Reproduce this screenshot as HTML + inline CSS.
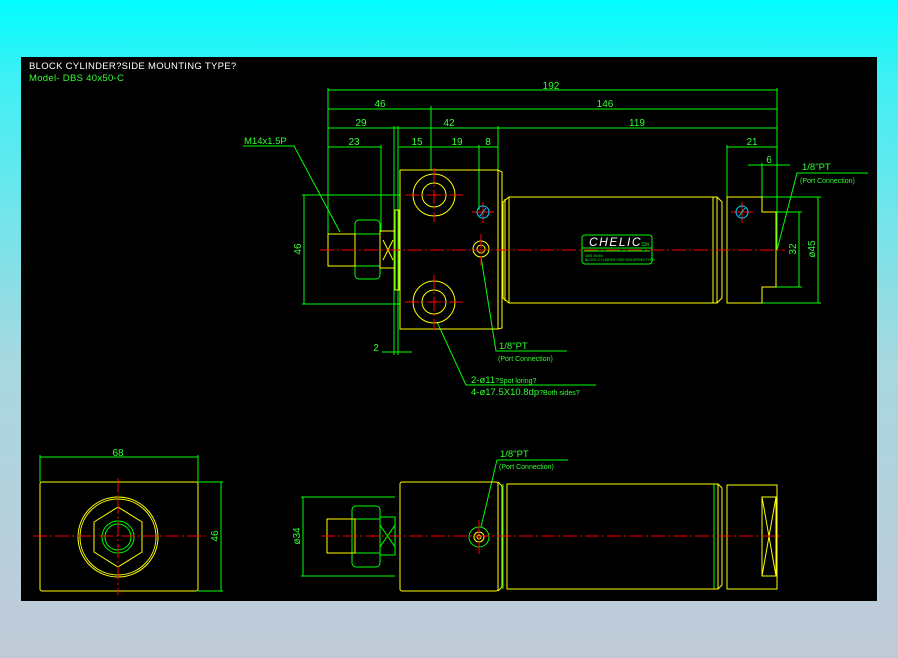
<!DOCTYPE html>
<html><head><meta charset="utf-8"><style>
html,body{margin:0;padding:0}
body{width:898px;height:658px;background:linear-gradient(#00fdff 0%,#3ff0f4 12%,#a8d8e0 55%,#c2cad8 100%);position:relative;overflow:hidden}
svg{position:absolute;left:0;top:0}
text{font-family:"Liberation Sans",sans-serif}
</style></head><body>
<svg width="898" height="658" viewBox="0 0 898 658">
<rect x="21" y="57" width="856" height="544" fill="#000"/>
<text x="29" y="69" fill="#fff" font-size="9.5" letter-spacing="0.3">BLOCK CYLINDER?SIDE MOUNTING TYPE?</text>
<text x="29" y="81" fill="#3f3" font-size="9.5" letter-spacing="0.3">Model- DBS 40x50-C</text>

<g stroke="#0f0" stroke-width="1" fill="none">
<!-- top dims -->
<line x1="328" y1="90" x2="777" y2="90"/>
<line x1="328" y1="109" x2="777" y2="109"/>
<line x1="328" y1="128" x2="777" y2="128"/>
<line x1="328" y1="147" x2="381" y2="147"/>
<line x1="399" y1="147" x2="498" y2="147"/>
<line x1="727" y1="147" x2="777" y2="147"/>
<line x1="748" y1="165" x2="790" y2="165"/>
<line x1="328" y1="88" x2="328" y2="237"/>
<line x1="777" y1="88" x2="777" y2="250"/>
<line x1="431" y1="106" x2="431" y2="170"/>
<line x1="381" y1="145" x2="381" y2="232"/>
<line x1="394" y1="126" x2="394" y2="355"/>
<line x1="398" y1="126" x2="398" y2="355"/>
<line x1="479" y1="145" x2="479" y2="210"/>
<line x1="498" y1="126" x2="498" y2="170"/>
<line x1="727" y1="145" x2="727" y2="197"/>
<line x1="762" y1="163" x2="762" y2="197"/>
<!-- 46 left vertical -->
<line x1="304" y1="195" x2="304" y2="304"/>
<line x1="302" y1="195" x2="400" y2="195"/>
<line x1="302" y1="304" x2="400" y2="304"/>
<line x1="382" y1="352" x2="412" y2="352"/>
<!-- right verticals -->
<line x1="799" y1="212" x2="799" y2="287"/>
<line x1="818" y1="197" x2="818" y2="303"/>
<line x1="776" y1="212" x2="802" y2="212"/>
<line x1="776" y1="287" x2="802" y2="287"/>
<line x1="762" y1="197" x2="821" y2="197"/>
<line x1="762" y1="303" x2="821" y2="303"/>
<!-- leaders -->
<polyline points="243,146 294,146 340,232"/>
<polyline points="481,257 496,351 567,351"/>
<polyline points="777,250 797,173 868,173"/>
<polyline points="437,322 466,385 596,385"/>
<polyline points="481,527 497,460 568,460"/>
<!-- nut top -->
<rect x="355" y="220" width="25" height="59" rx="4"/>
<line x1="355" y1="234" x2="380" y2="234"/><line x1="355" y1="266" x2="380" y2="266"/>
<!-- bottom left view -->
<line x1="40" y1="457" x2="198" y2="457"/>
<line x1="40" y1="455" x2="40" y2="482"/><line x1="198" y1="455" x2="198" y2="482"/>
<line x1="221" y1="482" x2="221" y2="591"/>
<line x1="198" y1="482" x2="223" y2="482"/><line x1="198" y1="591" x2="223" y2="591"/>
<circle cx="118" cy="537" r="16"/><circle cx="118" cy="537" r="13"/>
<!-- bottom right -->
<line x1="303" y1="497" x2="303" y2="576"/>
<line x1="301" y1="497" x2="395" y2="497"/><line x1="301" y1="576" x2="395" y2="576"/>
<rect x="352" y="506" width="28" height="61" rx="4"/>
<line x1="352" y1="519" x2="380" y2="519"/><line x1="352" y1="553" x2="380" y2="553"/>
<rect x="380" y="517" width="15" height="38"/>
<line x1="380" y1="525" x2="395" y2="547"/><line x1="395" y1="525" x2="380" y2="547"/>
<line x1="503" y1="484" x2="503" y2="589"/>
<line x1="714" y1="484" x2="714" y2="589"/>
<circle cx="479" cy="537" r="10"/>
</g>

<g stroke="#ff0" stroke-width="1" fill="none">
<!-- top view -->
<rect x="400" y="170" width="98" height="159"/>
<circle cx="434" cy="195" r="21"/><circle cx="434" cy="195" r="12"/>
<circle cx="434" cy="302" r="21"/><circle cx="434" cy="302" r="12"/>
<rect x="395" y="210" width="4" height="80"/>
<rect x="328" y="234" width="27" height="32"/>
<rect x="380" y="231" width="15" height="37"/>
<line x1="383" y1="240" x2="393" y2="260"/><line x1="393" y1="240" x2="383" y2="260"/>
<polyline points="498,170 502,172 502,328 498,329"/>
<polyline points="509,197 503,202 503,298 509,303"/>
<rect x="509" y="197" width="208" height="106"/>
<line x1="505" y1="199" x2="505" y2="301"/>
<line x1="713" y1="197" x2="713" y2="303"/>
<polyline points="717,197 722,202 722,298 717,303"/>
<polyline points="727,197 762,197 762,212 776,212 776,287 762,287 762,303 727,303 727,197"/>
<circle cx="481" cy="249" r="8"/><circle cx="481" cy="249" r="4"/>
<!-- bottom left view -->
<rect x="40" y="482" width="158" height="109" rx="2"/>
<circle cx="118" cy="537" r="40"/><circle cx="118" cy="537" r="38"/>
<polygon points="118,507 142,522 142,552 118,567 94,552 94,522"/>
<!-- bottom right -->
<rect x="327" y="519" width="28" height="34"/>
<rect x="400" y="482" width="98" height="109" rx="2"/>
<polyline points="498,482 502,486 502,587 498,591"/>
<rect x="507" y="484" width="211" height="105"/>
<polyline points="718,484 722,488 722,585 718,589"/>
<rect x="727" y="485" width="50" height="104"/>
<rect x="762" y="497" width="14" height="79"/>
<line x1="762" y1="497" x2="776" y2="576"/><line x1="776" y1="497" x2="762" y2="576"/>
<circle cx="479" cy="537" r="5"/><circle cx="479" cy="537" r="2"/>
</g>

<!-- CHELIC label -->
<g stroke="#0f0" fill="none">
<rect x="582" y="235" width="70" height="29" rx="3"/>
<line x1="582" y1="248" x2="652" y2="248"/>
<line x1="584" y1="251" x2="650" y2="251"/>
</g>
<text x="589" y="246" fill="#fff" font-size="12" font-style="italic" letter-spacing="1.5">CHELIC</text>
<text x="641" y="246" fill="#0f0" font-size="5">33n</text>
<text x="585" y="257" fill="#0f0" font-size="3.5">DBS 40x50</text>
<text x="585" y="261" fill="#0f0" font-size="3.5">BLOCK CYLINDER SIDE MOUNTING TYPE</text>

<!-- red centerlines -->
<g stroke="#f00" stroke-width="1" stroke-dasharray="14,3,2,3" fill="none">
<line x1="320" y1="250" x2="785" y2="250"/>
<line x1="405" y1="195" x2="465" y2="195"/><line x1="434" y1="168" x2="434" y2="222"/>
<line x1="405" y1="302" x2="465" y2="302"/><line x1="434" y1="275" x2="434" y2="330"/>
<line x1="33" y1="536" x2="205" y2="536"/><line x1="118" y1="478" x2="118" y2="595"/>
<line x1="321" y1="536" x2="780" y2="536"/>
<line x1="481" y1="234" x2="481" y2="266"/>
<line x1="479" y1="520" x2="479" y2="554"/>
</g>
<g stroke="#f00"><line x1="472" y1="212" x2="494" y2="212"/><line x1="483" y1="202" x2="483" y2="223"/>
<line x1="731" y1="212" x2="753" y2="212"/><line x1="742" y1="202" x2="742" y2="223"/></g>
<g stroke="#0cf" fill="none"><circle cx="483" cy="212" r="6"/><circle cx="742" cy="212" r="6"/>
<line x1="480" y1="216" x2="486" y2="208"/><line x1="739" y1="216" x2="745" y2="208"/></g>

<g fill="#3f3" font-size="10" text-anchor="middle">
<text x="551" y="89">192</text>
<text x="380" y="107">46</text>
<text x="605" y="107">146</text>
<text x="361" y="126">29</text>
<text x="449" y="126">42</text>
<text x="637" y="126">119</text>
<text x="354" y="145">23</text>
<text x="417" y="145">15</text>
<text x="457" y="145">19</text>
<text x="488" y="145">8</text>
<text x="752" y="145">21</text>
<text x="769" y="163">6</text>
<text x="376" y="351">2</text>
<text x="118" y="456">68</text>
<text x="301" y="249" transform="rotate(-90 301 249)" dy="0">46</text>
<text x="796" y="249" transform="rotate(-90 796 249)">32</text>
<text x="815" y="249" transform="rotate(-90 815 249)">ø45</text>
<text x="218" y="536" transform="rotate(-90 218 536)">46</text>
<text x="300" y="536" transform="rotate(-90 300 536)">ø34</text>
</g>
<g fill="#3f3" font-size="9.5">
<text x="244" y="144">M14x1.5P</text>
<text x="499" y="349">1/8"PT</text>
<text x="498" y="361" font-size="7">(Port Connection)</text>
<text x="802" y="170">1/8"PT</text>
<text x="800" y="183" font-size="7">(Port Connection)</text>
<text x="471" y="383">2-ø11<tspan font-size="7">?Spot loring?</tspan></text>
<text x="471" y="395">4-ø17.5X10.8dp<tspan font-size="7">?Both sides?</tspan></text>
<text x="500" y="457">1/8"PT</text>
<text x="499" y="469" font-size="7">(Port Connection)</text>
</g>
</svg>
</body></html>
